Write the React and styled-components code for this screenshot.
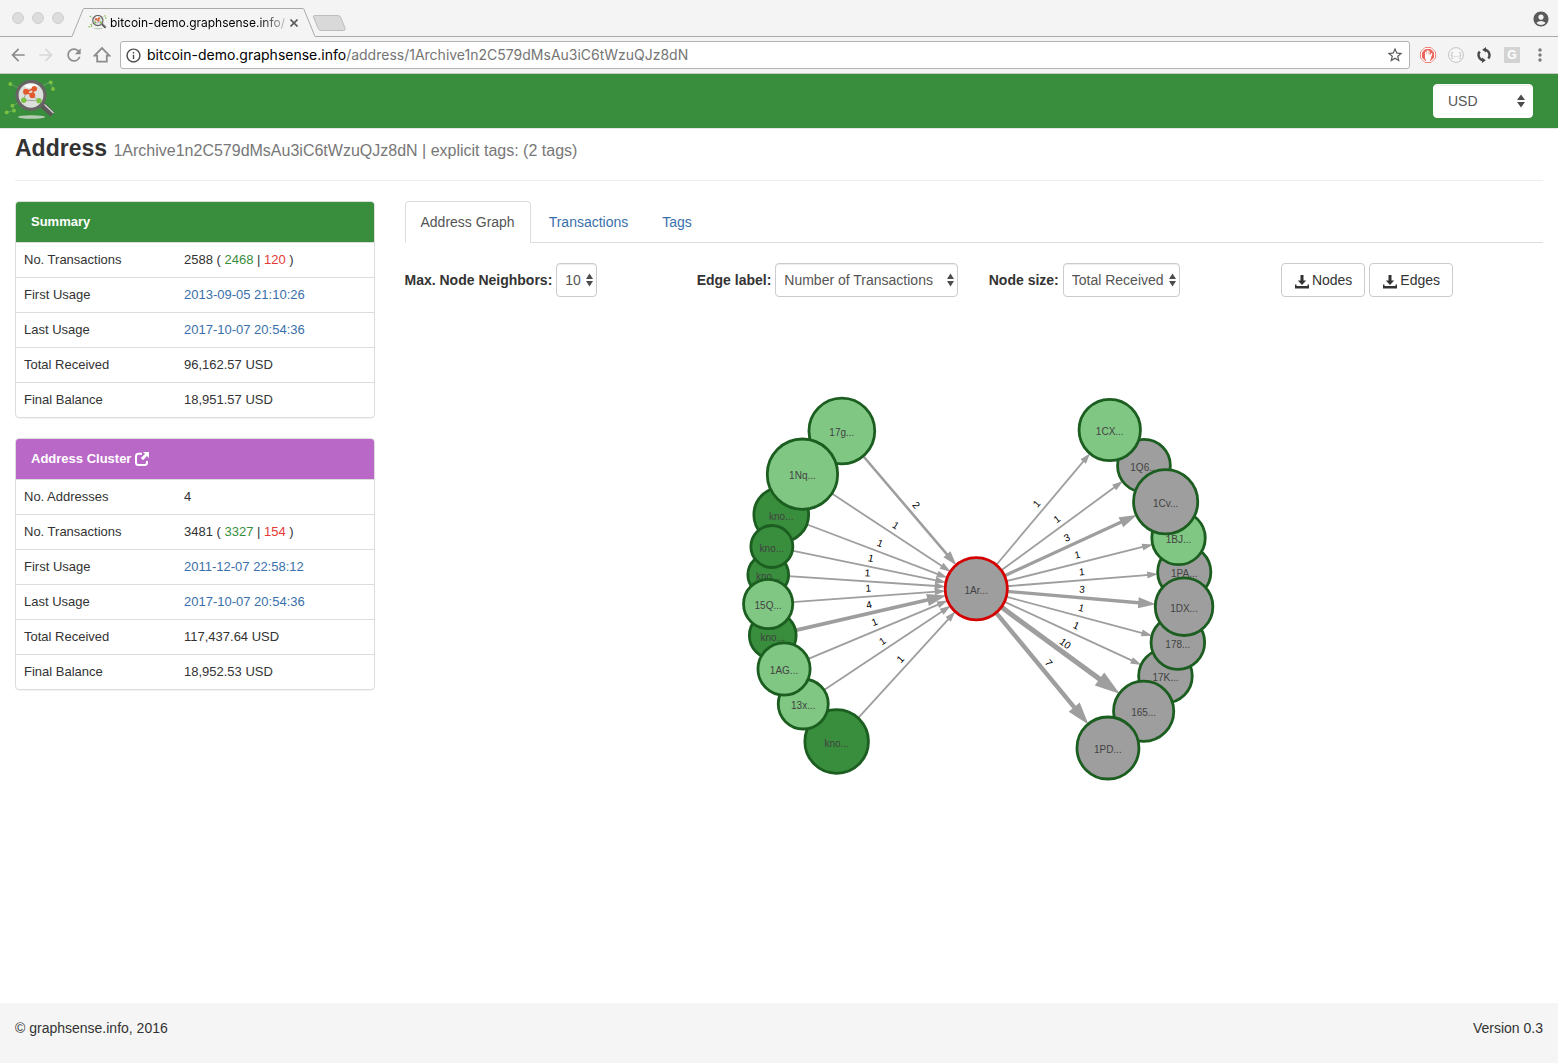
import React from "react";
import styled, { createGlobalStyle } from "styled-components";
import {
  MdArrowBack,
  MdArrowForward,
  MdRefresh,
  MdInfoOutline,
  MdStarBorder,
  MdMoreVert,
  MdAccountCircle,
} from "react-icons/md";

const color = {
  green: "#388e3c",
  lightGreen: "#81c784",
  darkGreen: "#1b5e20",
  purple: "#ba68c8",
  grey: "#9e9e9e",
  red: "#d50000",
  link: "#3a70ab",
  text: "#333333",
  line: "#dddddd",
};

const GlobalStyle = createGlobalStyle`
  * { box-sizing: border-box; }
  body {
    margin: 0;
    background: #fff;
    color: ${color.text};
    font: 14px/20px "Liberation Sans", Arial, sans-serif;
  }
  button, select { font: inherit; color: inherit; }
  a { color: ${color.link}; text-decoration: none; }
  svg { display: block; flex: none; }
`;

const Page = styled.div`
  min-height: 100vh;
  display: flex;
  flex-direction: column;
`;

/* ---------- browser window ---------- */

const TabStrip = styled.div`
  height: 37px;
  display: flex;
  align-items: flex-end;
  padding: 0 8px 0 12px;
  background: #f4f4f4;
  border-bottom: 1px solid #a9a9a9;
`;

const WindowButtons = styled.div`
  display: flex;
  gap: 8px;
  align-self: center;
  width: 60px;
`;

const WindowButton = styled.button`
  width: 12px;
  height: 12px;
  padding: 0;
  border: 1px solid #cfcfcf;
  border-radius: 50%;
  background: #dcdcdc;
`;

const Tab = styled.div`
  display: flex;
  height: 29px;
  margin-bottom: -1px;
`;

const TabBody = styled.div`
  width: 219px;
  display: flex;
  align-items: center;
  gap: 3px;
  padding: 0 4px;
  background: #f4f4f4;
  border-top: 1px solid #a9a9a9;
`;

const TabTitle = styled.span`
  flex: 1;
  white-space: nowrap;
  color: #000;
  font: 12px/16px Inter, Roboto, sans-serif;
  mask-image: linear-gradient(to right, #000 84%, rgba(0, 0, 0, 0.2));
`;

const PlainButton = styled.button`
  display: flex;
  align-items: center;
  justify-content: center;
  padding: 0;
  border: 0;
  background: none;
  width: ${(p) => p.$width || 20}px;
  color: ${(p) => p.$color || "#5a5a5a"};
`;

const Spacer = styled.div`
  flex: 1;
`;

const Toolbar = styled.div`
  height: 37px;
  display: flex;
  align-items: center;
  padding: 0 8px;
  background: #f4f4f4;
  border-bottom: 1px solid #c9c9c9;
`;

const NavButtons = styled.div`
  display: flex;
  gap: 8px;
  margin-right: 8px;
`;

const AddressBar = styled.div`
  flex: 1;
  min-width: 0;
  height: 28px;
  display: flex;
  align-items: center;
  gap: 5px;
  padding: 0 4px;
  background: #fff;
  border: 1px solid #b3b3b3;
  border-radius: 3px;
`;

const UrlText = styled.div`
  flex: 1;
  overflow: hidden;
  white-space: nowrap;
  color: #757575;
  font: 14px/20px Inter, Roboto, sans-serif;
  outline: none;

  b {
    color: #000;
    font-weight: 400;
  }
`;

const Extensions = styled.div`
  display: flex;
  gap: 8px;
  margin-left: 8px;
`;

const GlyphText = styled.text`
  font: ${(p) => p.$weight || 400} ${(p) => p.$size}px "Liberation Sans", Arial, sans-serif;
  text-anchor: middle;
`;

/* ---------- application ---------- */

const Header = styled.header`
  height: 55px;
  display: flex;
  align-items: center;
  justify-content: space-between;
  padding: 0 25px 0 4px;
  background: ${color.green};
  border-bottom: 1px solid #e7e7e7;
`;

const SelectBox = styled.span`
  position: relative;
  display: inline-block;
  width: ${(p) => p.$width}px;

  svg {
    position: absolute;
    right: ${(p) => (p.$wide ? 8 : 4)}px;
    top: 10px;
    pointer-events: none;
  }
`;

const Select = styled.select`
  display: block;
  width: 100%;
  height: 34px;
  padding: 0 0 0 ${(p) => (p.$wide ? 14 : 8)}px;
  appearance: none;
  color: #555;
  background: #fff;
  border: 1px solid ${(p) => (p.$wide ? "#fff" : "#ccc")};
  border-radius: 4px;
  box-shadow: inset 0 1px 1px rgba(0, 0, 0, 0.075);
`;

const Main = styled.main`
  flex: 1;
  padding: 0 15px;
`;

const PageHeader = styled.div`
  height: 52px;
  padding-top: 6px;
  margin-bottom: 20px;
  border-bottom: 1px solid #eee;
`;

const Title = styled.h1`
  margin: 0;
  font-size: 23px;
  line-height: 26px;
  font-weight: 700;
`;

const Subtitle = styled.small`
  font-size: 16px;
  font-weight: 400;
  color: #777;
`;

const Columns = styled.div`
  display: flex;
  margin: 0 -15px;
`;

const Column = styled.div`
  flex: 0 0 ${(p) => p.$share}%;
  min-width: 0;
  padding: 0 15px;
`;

const Panel = styled.section`
  margin-bottom: 20px;
  border: 1px solid ${color.line};
  border-radius: 4px;
  overflow: hidden;
  box-shadow: 0 1px 1px rgba(0, 0, 0, 0.05);
`;

const PanelHeading = styled.h2`
  display: flex;
  align-items: center;
  gap: 4px;
  height: 40px;
  margin: 0;
  padding: 0 15px;
  color: #fff;
  background: ${(p) => p.$color};
  font-size: 13px;
  line-height: 20px;
  font-weight: 700;

  a {
    color: #fff;
  }
`;

const Facts = styled.table`
  width: 100%;
  border-collapse: collapse;
  font-size: 13px;
  line-height: 18px;

  th,
  td {
    padding: 8px;
    border-top: 1px solid ${color.line};
    text-align: left;
    font-weight: 400;
  }

  th {
    width: 160px;
  }
`;

const Amount = styled.span`
  color: ${(p) => p.$color};
`;

const Tabs = styled.nav`
  display: flex;
  gap: 2px;
  border-bottom: 1px solid ${color.line};
`;

const TabLink = styled.a`
  padding: 10px 15px;
  margin-bottom: -1px;
  border: 1px solid ${(p) => (p.$active ? color.line : "transparent")};
  border-bottom-color: ${(p) => (p.$active ? "#fff" : "transparent")};
  border-radius: 4px 4px 0 0;
  color: ${(p) => (p.$active ? "#555" : color.link)};
`;

const Controls = styled.div`
  display: grid;
  grid-template-columns: repeat(4, 1fr);
  margin: 20px -15px 0;
`;

const Control = styled.div`
  display: flex;
  align-items: center;
  gap: 4px;
  padding-left: 15px;
  white-space: nowrap;

  label {
    font-weight: 700;
  }
`;

const Button = styled.button`
  display: flex;
  align-items: center;
  gap: 3px;
  height: 34px;
  padding: 0 12px 0 13px;
  background: #fff;
  border: 1px solid #ccc;
  border-radius: 4px;
`;

const Graph = styled.svg`
  width: 100%;
  height: 420px;
  margin-top: 83px;
`;

const NodeLabel = styled.text`
  font: 10px "Liberation Sans", Arial, sans-serif;
  fill: #424242;
  text-anchor: middle;
`;

const EdgeLabel = styled.text`
  font: 10px "Liberation Sans", Arial, sans-serif;
  fill: #000;
  text-anchor: middle;
`;

const Footer = styled.footer`
  height: 60px;
  display: flex;
  justify-content: space-between;
  padding: 15px;
  background: #f5f5f5;
`;

/* ---------- icons ---------- */

const Logo = ({ size = 52 }) => (
  <svg width={size} height={(size * 42) / 52} viewBox="4 80 52 42" aria-hidden="true">
    <ellipse cx="31.5" cy="117" rx="13.5" ry="1.7" fill="#b5cdb5" />
    <path
      d="M10.3 84 26 91.7M34 88.7 50.7 82.3 53 89M12.3 105.7 23.7 100.3M6.7 112.3 14 110.7 12.3 105.7"
      stroke="#76a96b"
      strokeWidth="0.8"
      fill="none"
    />
    <path d="M42.5 105l10 9.5" stroke="#5c5a58" strokeWidth="6" />
    <path d="M44.5 104.500l9 8.5" stroke="#e0e0e0" strokeWidth="1.1" />
    <circle cx="31" cy="95.3" r="14" fill="#dcdfdc" stroke="#666563" strokeWidth="3.2" />
    <ellipse cx="31" cy="86" rx="6.500" ry="2" fill="#fff" />
    <path
      d="M26 91.7 23.7 100.3M32.3 95.3 39 100.7M23.7 100.3 39 100.7"
      stroke="#8a8a8a"
      strokeWidth="0.7"
    />
    <path d="M26 91.7 34 88.7 32.3 95.3z" stroke="#e2572b" strokeWidth="1.5" fill="none" />
    <g fill="#e2572b">
      <circle cx="26" cy="91.7" r="2.9" />
      <circle cx="34.3" cy="88.7" r="2.7" />
      <circle cx="32.3" cy="95.3" r="2.9" />
    </g>
    <g fill="#7cc242">
      <circle cx="23.7" cy="100.3" r="2.7" />
      <circle cx="39" cy="100.7" r="2.6" />
      <circle cx="10.3" cy="84" r="1.9" />
      <circle cx="50.7" cy="82.3" r="1.9" />
      <circle cx="53" cy="89" r="1.9" />
      <circle cx="12.3" cy="105.7" r="1.9" />
      <circle cx="14" cy="110.7" r="1.9" />
      <circle cx="6.7" cy="112.3" r="1.9" />
    </g>
  </svg>
);

const Arrows = ({ large }) => (
  <svg width={large ? 8 : 7} height="14" viewBox="0 0 8 14" preserveAspectRatio="none" aria-hidden="true">
    <path d="M4 .5l4 5.500H0zM4 13.500l4-5.500H0z" fill="#4c4c4c" />
  </svg>
);

const HomeIcon = () => (
  <svg width="18" height="18" viewBox="0 0 18 18" fill="none" stroke="#8c8c8c" strokeWidth="1.8">
    <path d="M1.500 9.700 9 2l7.500 7.700h-2.700v6H4.200v-6z" />
  </svg>
);

const CloseIcon = () => (
  <svg width="8" height="8" viewBox="0 0 8 8" stroke="#5a5a5a" strokeWidth="1.6">
    <path d="M.5.5l7 7M7.500.5l-7 7" />
  </svg>
);

const AdBlockIcon = () => (
  <svg width="16" height="16" viewBox="0 0 16 16">
    <path d="M5 .5h6L15.500 5v6L11 15.500H5L.5 11V5z" fill="#fff" stroke="#f0857c" />
    <path d="M5.500 2h5L14 5.500v5L10.500 14h-5L2 10.500v-5z" fill="#ea6459" />
    <path
      d="M5 9V5q.6-.7 1.200 0v2.500h.4V3.500q.7-.8 1.300 0v4h.4V3.800q.7-.7 1.300 0v4.400h.3l1.300-2q1-.4 1.200.2L11 11q-.8 3.500-3 3.500T5 11z"
      fill="#fff"
    />
  </svg>
);

const JsonIcon = () => (
  <svg width="16" height="16" viewBox="0 0 16 16">
    <circle cx="8" cy="8" r="7.4" fill="#f8f8f8" stroke="#c2c2c2" />
    <GlyphText $size={7} x="8" y="10" fill="#a8a8a8">
      {"{...}"}
    </GlyphText>
  </svg>
);

const SyncIcon = () => (
  <svg width="16" height="16" viewBox="0 0 16 16" fill="none" stroke="#4a4a4a" strokeWidth="2.4">
    <path d="M9 2.600A5.500 5.500 0 0 1 12.300 11.400M7 13.400A5.500 5.500 0 0 1 3.700 4.600" />
    <path d="M10 0v5.400L6.200 2.700zM6 16v-5.400l3.800 2.700z" fill="#4a4a4a" stroke="none" />
  </svg>
);

const GIcon = () => (
  <svg width="16" height="16" viewBox="0 0 16 16">
    <rect width="16" height="16" rx="1" fill="#d3d3d3" />
    <GlyphText $size={12} $weight={700} x="8" y="12" fill="#fff">
      G
    </GlyphText>
  </svg>
);

const DownloadIcon = () => (
  <svg width="14" height="18" viewBox="0 0 14 18" fill="#333">
    <path d="M5.500 4h3v5.500h2.700L7 14 2.800 9.500h2.700z" />
    <path d="M0 13.500h1.500V15h11v-1.500H14V17.500H0z" />
  </svg>
);

const ShareIcon = () => (
  <svg width="14" height="14" viewBox="0 0 14 14" fill="none" stroke="#fff" strokeWidth="2">
    <path d="M7 1.700H3.500Q1 1.700 1 4.200v6.300Q1 13 3.500 13h6q2.500 0 2.500-2.500V9" />
    <path d="M8 0h6v6l-2-2-4 4.200L5.900 6 10 2z" fill="#fff" stroke="none" />
  </svg>
);

/* ---------- graph ---------- */

const ROOT = { label: "1Ar...", x: 976, y: 588.7, r: 30.7, fill: color.grey };
const L = color.lightGreen;
const D = color.green;
const G = color.grey;

const incoming = [
  { label: "kno...", x: 836.4, y: 741.5, r: 31.4, fill: D, count: 1 },
  { label: "17g...", x: 841.6, y: 431, r: 32.5, fill: L, count: 2 },
  { label: "13x...", x: 803, y: 704, r: 24.6, fill: L, count: 1 },
  { label: "kno...", x: 781, y: 514.7, r: 27, fill: D, count: 1 },
  { label: "kno...", x: 768, y: 574.7, r: 20, fill: D, count: 1 },
  { label: "kno...", x: 772.5, y: 635.5, r: 23, fill: D, count: 4 },
  { label: "1Nq...", x: 802.2, y: 474.2, r: 34.8, fill: L, count: 1 },
  { label: "kno...", x: 771.6, y: 546.5, r: 20.6, fill: D, count: 1 },
  { label: "15Q...", x: 767.9, y: 604, r: 24.2, fill: L, count: 1 },
  { label: "1AG...", x: 783.8, y: 669, r: 25.7, fill: L, count: 1 },
];

const outgoing = [
  { label: "17K...", x: 1165.2, y: 676, r: 26.4, fill: G, count: 1 },
  { label: "165...", x: 1143.4, y: 711.3, r: 29.7, fill: G, count: 10 },
  { label: "1PD...", x: 1107.7, y: 748, r: 30.6, fill: G, count: 7 },
  { label: "1Q6...", x: 1143.7, y: 465.7, r: 26, fill: G, count: 1 },
  { label: "1CX...", x: 1109.5, y: 430, r: 30.3, fill: L, count: 1 },
  { label: "1PA...", x: 1184, y: 572, r: 26.2, fill: G, count: 1 },
  { label: "1BJ...", x: 1178.3, y: 538, r: 26.3, fill: L, count: 1 },
  { label: "1Cv...", x: 1165.4, y: 501.7, r: 31.7, fill: G, count: 3 },
  { label: "178...", x: 1177.6, y: 642.5, r: 26.4, fill: G, count: 1 },
  { label: "1DX...", x: 1183.8, y: 606.7, r: 28.4, fill: G, count: 3 },
];

const strokeFor = { 1: 1.8, 2: 2.6, 3: 3.3, 4: 3.7, 7: 4.4, 10: 5 };

function Edge({ from, to, count }) {
  const width = strokeFor[count];
  const angle = Math.atan2(to.y - from.y, to.x - from.x);
  const distance = Math.hypot(to.x - from.x, to.y - from.y);
  const start = from.r;
  const end = distance - to.r;
  const head = 3 + width * 4.4;
  const half = 1 + width * 1.4;
  const degrees = (angle * 180) / Math.PI;
  return (
    <g transform={`translate(${from.x} ${from.y}) rotate(${degrees})`}>
      <line x1={start} x2={end - head / 2} stroke={G} strokeWidth={width} />
      <path d={`M${end} 0L${end - head} ${half}V${-half}z`} fill={G} />
      <EdgeLabel x={(start + end) / 2} y={-5}>
        {count}
      </EdgeLabel>
    </g>
  );
}

function Node({ node, stroke = color.darkGreen }) {
  return (
    <g>
      <circle cx={node.x} cy={node.y} r={node.r + 0.4} fill={node.fill} stroke={stroke} strokeWidth="2.8" />
      <NodeLabel x={node.x} y={node.y + 5}>
        {node.label}
      </NodeLabel>
    </g>
  );
}

function AddressGraph() {
  return (
    <Graph viewBox="734 380 480 420" role="img" aria-label="Address Graph">
      {incoming.map((n, i) => (
        <Edge key={i} from={n} to={ROOT} count={n.count} />
      ))}
      {outgoing.map((n, i) => (
        <Edge key={i} from={ROOT} to={n} count={n.count} />
      ))}
      {[...incoming, ...outgoing].map((n, i) => (
        <Node key={i} node={n} />
      ))}
      <Node node={ROOT} stroke={color.red} />
    </Graph>
  );
}

/* ---------- pieces ---------- */

function Dropdown({ id, width, options, wide, ariaLabel }) {
  return (
    <SelectBox $width={width} $wide={wide}>
      <Select id={id} $wide={wide} aria-label={ariaLabel}>
        {options.map((o) => (
          <option key={o}>{o}</option>
        ))}
      </Select>
      <Arrows large={wide} />
    </SelectBox>
  );
}

function Transactions({ total, received, sent }) {
  return (
    <>
      {total} ( <Amount $color={color.green}>{received}</Amount> |{" "}
      <Amount $color="#e53935">{sent}</Amount> )
    </>
  );
}

function FactTable({ rows }) {
  return (
    <Facts>
      <tbody>
        {rows.map(([name, value]) => (
          <tr key={name}>
            <th scope="row">{name}</th>
            <td>{value}</td>
          </tr>
        ))}
      </tbody>
    </Facts>
  );
}

const summary = [
  ["No. Transactions", <Transactions total="2588" received="2468" sent="120" />],
  ["First Usage", <a href="#first">2013-09-05 21:10:26</a>],
  ["Last Usage", <a href="#last">2017-10-07 20:54:36</a>],
  ["Total Received", "96,162.57 USD"],
  ["Final Balance", "18,951.57 USD"],
];

const cluster = [
  ["No. Addresses", "4"],
  ["No. Transactions", <Transactions total="3481" received="3327" sent="154" />],
  ["First Usage", <a href="#cluster-first">2011-12-07 22:58:12</a>],
  ["Last Usage", <a href="#cluster-last">2017-10-07 20:54:36</a>],
  ["Total Received", "117,437.64 USD"],
  ["Final Balance", "18,952.53 USD"],
];

function BrowserChrome() {
  return (
    <>
      <TabStrip>
        <WindowButtons>
          <WindowButton aria-label="Close window" />
          <WindowButton aria-label="Minimize window" />
          <WindowButton aria-label="Zoom window" />
        </WindowButtons>
        <Tab>
          <svg width="12" height="29" viewBox="0 0 12 29" aria-hidden="true">
            <path d="M0 28.500L11.500.5H12V29H0z" fill="#f4f4f4" />
            <path d="M0 28.500L11 1.500Q11.500.5 12 .5" fill="none" stroke="#a9a9a9" />
          </svg>
          <TabBody>
            <Logo size={19} />
            <TabTitle>bitcoin-demo.graphsense.info/</TabTitle>
            <PlainButton $width={10} aria-label="Close tab">
              <CloseIcon />
            </PlainButton>
          </TabBody>
          <svg width="12" height="29" viewBox="0 0 12 29" aria-hidden="true">
            <path d="M12 28.500L.5.5H0V29h12z" fill="#f4f4f4" />
            <path d="M12 28.500L1 1.500Q.5.5 0 .5" fill="none" stroke="#a9a9a9" />
          </svg>
        </Tab>
        <PlainButton $width={28} aria-label="New tab">
          <svg width="34" height="21" viewBox="0 0 34 21" aria-hidden="true">
            <path
              d="M2.500 .5H26Q28 .5 29 3l4 10q.7 2.500-1.500 2.500H9Q7 15.500 6 13L1.500 2Q1 .5 2.500.5z"
              fill="#d9d9d9"
              stroke="#bcbcbc"
            />
          </svg>
        </PlainButton>
        <Spacer />
        <PlainButton $width={18} aria-label="Profile">
          <svg width="18" height="36" viewBox="0 0 18 36" aria-hidden="true">
            <MdAccountCircle x="0" y="10" size={18} />
          </svg>
        </PlainButton>
      </TabStrip>
      <Toolbar>
        <NavButtons>
          <PlainButton $color="#8c8c8c" aria-label="Back">
            <MdArrowBack size={20} />
          </PlainButton>
          <PlainButton $color="#d8d8d8" aria-label="Forward">
            <MdArrowForward size={20} />
          </PlainButton>
          <PlainButton $color="#8c8c8c" aria-label="Reload">
            <MdRefresh size={20} />
          </PlainButton>
          <PlainButton aria-label="Home">
            <HomeIcon />
          </PlainButton>
        </NavButtons>
        <AddressBar>
          <MdInfoOutline size={17} color="#4a4a4a" />
          <UrlText
            role="textbox"
            aria-label="Address bar"
            contentEditable
            suppressContentEditableWarning
            spellCheck={false}
          >
            <b>bitcoin-demo.graphsense.info</b>/address/1Archive1n2C579dMsAu3iC6tWzuQJz8dN
          </UrlText>
          <PlainButton $width={20} aria-label="Bookmark">
            <MdStarBorder size={18} />
          </PlainButton>
        </AddressBar>
        <Extensions>
          <PlainButton aria-label="Ad blocker">
            <AdBlockIcon />
          </PlainButton>
          <PlainButton aria-label="JSON viewer">
            <JsonIcon />
          </PlainButton>
          <PlainButton aria-label="Sync">
            <SyncIcon />
          </PlainButton>
          <PlainButton aria-label="G extension">
            <GIcon />
          </PlainButton>
          <PlainButton aria-label="Menu" $color="#7a7a7a">
            <MdMoreVert size={20} />
          </PlainButton>
        </Extensions>
      </Toolbar>
    </>
  );
}

export default function App() {
  return (
    <Page>
      <GlobalStyle />
      <BrowserChrome />
      <Header>
        <a href="#home" aria-label="GraphSense">
          <Logo />
        </a>
        <Dropdown ariaLabel="Currency" width={100} wide options={["USD", "EUR", "BTC"]} />
      </Header>
      <Main>
        <PageHeader>
          <Title>
            Address{" "}
            <Subtitle>1Archive1n2C579dMsAu3iC6tWzuQJz8dN | explicit tags: (2 tags)</Subtitle>
          </Title>
        </PageHeader>
        <Columns>
          <Column $share={25}>
            <Panel>
              <PanelHeading $color={color.green}>Summary</PanelHeading>
              <FactTable rows={summary} />
            </Panel>
            <Panel>
              <PanelHeading $color={color.purple}>
                Address Cluster
                <a href="#cluster" aria-label="Open cluster">
                  <ShareIcon />
                </a>
              </PanelHeading>
              <FactTable rows={cluster} />
            </Panel>
          </Column>
          <Column $share={75}>
            <Tabs>
              <TabLink href="#graph" $active>
                Address Graph
              </TabLink>
              <TabLink href="#transactions">Transactions</TabLink>
              <TabLink href="#tags">Tags</TabLink>
            </Tabs>
            <Controls>
              <Control>
                <label htmlFor="neighbors">Max. Node Neighbors:</label>
                <Dropdown id="neighbors" width={41} options={["10", "20", "50"]} />
              </Control>
              <Control>
                <label htmlFor="edge-label">Edge label:</label>
                <Dropdown id="edge-label" width={183} options={["Number of Transactions", "Estimated Value"]} />
              </Control>
              <Control>
                <label htmlFor="node-size">Node size:</label>
                <Dropdown id="node-size" width={117} options={["Total Received", "Final Balance"]} />
              </Control>
              <Control>
                <Button type="button">
                  <DownloadIcon />
                  Nodes
                </Button>
                <Button type="button">
                  <DownloadIcon />
                  Edges
                </Button>
              </Control>
            </Controls>
            <AddressGraph />
          </Column>
        </Columns>
      </Main>
      <Footer>
        <span>© graphsense.info, 2016</span>
        <span>Version 0.3</span>
      </Footer>
    </Page>
  );
}
